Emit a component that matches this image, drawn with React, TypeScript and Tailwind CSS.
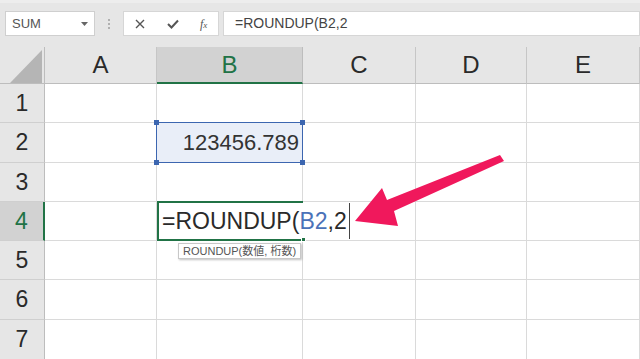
import React from "react";

const F = { fontFamily: '"Liberation Sans", Arial, sans-serif' };

function Corner() {
  return (
    <div className="relative bg-[#e6e6e6] border-r border-b border-[#bdbdbd]">
      <svg className="absolute left-[10px] top-[3px]" width="32" height="33" viewBox="0 0 32 33">
        <polygon points="32,0 32,33 0,33" fill="#b5b5b5" />
      </svg>
    </div>
  );
}

function ColHead({ label, active }: { label: string; active?: boolean }) {
  return (
    <div
      className={
        "flex items-center justify-center text-[24px] border-r " +
        (active
          ? "bg-[#d2d2d2] text-[#217346] border-[#bdbdbd] border-b-2 border-b-[#217346]"
          : "bg-[#e6e6e6] text-[#2a2a2a] border-[#c6c6c6] border-b border-b-[#bdbdbd]")
      }
    >
      {label}
    </div>
  );
}

function RowHead({ n, active }: { n: number; active?: boolean }) {
  return (
    <div
      className={
        "flex items-center justify-center text-[23px] border-b border-[#cfcfcf] " +
        (active
          ? "bg-[#d2d2d2] text-[#217346] border-r-2 border-r-[#217346]"
          : "bg-[#e6e6e6] text-[#2a2a2a] border-r border-r-[#bdbdbd]")
      }
    >
      {n}
    </div>
  );
}

function Cell({ className = "", children }: { className?: string; children?: React.ReactNode }) {
  return <div className={"border-r border-b border-[#dadada] " + className}>{children}</div>;
}

function Handle({ pos }: { pos: string }) {
  return <div className={"absolute w-[5px] h-[5px] bg-[#3c66b0] " + pos} />;
}

export default function App() {
  const rows = [1, 2, 3, 4, 5, 6, 7];
  return (
    <div className="relative w-[640px] h-[359px] overflow-hidden bg-white" style={F}>
      {/* Toolbar */}
      <div className="h-[47px] bg-[#e6e6e6] border-t-[3px] border-[#ededed] flex items-start pt-[8px]">
        <div className="ml-[5px] w-[90px] h-[25px] bg-white border border-[#cfcfcf] flex items-center justify-between pl-[6px] pr-[6px]">
          <span className="text-[13px] text-[#555]">SUM</span>
          <svg width="7" height="4" viewBox="0 0 7 4">
            <polygon points="0,0 7,0 3.5,4" fill="#666" />
          </svg>
        </div>
        <div className="w-[28px] h-[25px] flex flex-col items-center justify-center gap-[2px]">
          <div className="w-[2px] h-[2px] bg-[#b0b0b0]" />
          <div className="w-[2px] h-[2px] bg-[#b0b0b0]" />
          <div className="w-[2px] h-[2px] bg-[#b0b0b0]" />
        </div>
        <div className="w-[96px] h-[25px] bg-white border border-[#d6d6d6] flex items-center">
          <svg className="ml-[11px]" width="10" height="10" viewBox="0 0 10 10">
            <path d="M1 1 L9 9 M9 1 L1 9" stroke="#555" strokeWidth="1.4" />
          </svg>
          <svg className="ml-[22px]" width="12" height="10" viewBox="0 0 12 10">
            <path d="M1 5 L4.5 8.5 L11 1.5" stroke="#555" strokeWidth="2" fill="none" />
          </svg>
          <span
            className="ml-[21px] text-[12px] italic text-[#555]"
            style={{ fontFamily: '"Liberation Serif", serif' }}
          >
            f<span className="text-[9px]">x</span>
          </span>
        </div>
        <div className="ml-[4px] flex-1 h-[25px] bg-white border border-[#d6d6d6] flex items-center pl-[11px]">
          <span className="text-[14px] text-[#444]">=ROUNDUP(B2,2</span>
        </div>
      </div>

      {/* Sheet grid */}
      <div className="grid grid-cols-[45px_112px_146px_113px_111px_113px] grid-rows-[37px_39px_40px_39px_39px_39px_40px_40px]">
        <Corner />
        <ColHead label="A" />
        <ColHead label="B" active />
        <ColHead label="C" />
        <ColHead label="D" />
        <ColHead label="E" />
        {rows.map((r) => (
          <React.Fragment key={r}>
            <RowHead n={r} active={r === 4} />
            <Cell />
            {r === 2 ? (
              <div className="relative border-r border-b border-[#dadada]">
                <div className="absolute left-[-1px] top-[-1px] right-[-1px] bottom-[-1px] bg-[#e9eef8] border border-[#3c66b0] flex items-center justify-end pr-[3px]">
                  <span className="text-[22px] text-[#333]">123456.789</span>
                </div>
                <Handle pos="left-[-3px] top-[-3px]" />
                <Handle pos="right-[-3px] top-[-3px]" />
                <Handle pos="left-[-3px] bottom-[-3px]" />
                <Handle pos="right-[-3px] bottom-[-3px]" />
              </div>
            ) : r === 4 ? (
              <div className="relative z-10 border-l-2 border-t-2 border-b-2 border-[#217346] flex items-center pl-[3px] mt-[-1px]">
                <span className="shrink-0 text-[23px] text-[#2a2a2a] whitespace-nowrap">
                  =ROUNDUP(<span className="text-[#4a72b8]">B2</span>,2
                </span>
                <span className="shrink-0 ml-[2px] w-[1px] h-[36px] bg-[#444]" />
                <div className="absolute right-[-3px] bottom-[-3px] w-[5px] h-[5px] bg-[#217346] border border-white" />
              </div>
            ) : (
              <Cell />
            )}
            <Cell />
            <Cell />
            <Cell />
          </React.Fragment>
        ))}
      </div>

      {/* Tooltip */}
      <div
        className="absolute left-[178px] top-[243px] h-[16px] px-[4px] bg-white border border-[#c8c8c8] shadow-[1px_1px_2px_rgba(0,0,0,0.25)] flex items-center z-20"
        style={{ fontFamily: '"Liberation Sans", "Noto Sans CJK JP", sans-serif' }}
      >
        <span className="text-[11px] text-[#555] leading-none">ROUNDUP(数値, 桁数)</span>
      </div>

      {/* Arrow */}
      <svg className="absolute left-0 top-0 z-30" width="640" height="359" viewBox="0 0 640 359">
        <polygon
          points="355,221 382,188 387,200 500,155 504,161 394,211 398,226"
          fill="#f0185c"
        />
      </svg>
    </div>
  );
}
